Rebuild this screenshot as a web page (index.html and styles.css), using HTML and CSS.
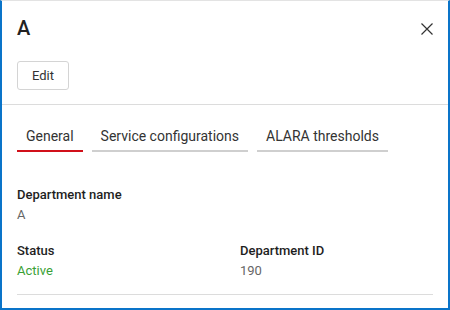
FILE: index.html
```html
<!DOCTYPE html>
<html lang="en">
  <head>
    <meta charset="UTF-8" />
    <title>Department A</title>
    <link rel="stylesheet" href="styles.css">
  </head>
  <body>
    <!-- 패널 -->
    <section class="panel">
      <header class="panel-head">
        <div class="title-row">
          <h1 class="title">A</h1>
          <button class="close" type="button" aria-label="Close">
            <svg width="12" height="12" viewBox="0 0 12 12">
              <path d="M0.5 0.5 L11.5 11.5 M11.5 0.5 L0.5 11.5" stroke="#333" stroke-width="1.2" fill="none" />
            </svg>
          </button>
        </div>
        <button class="btn" type="button">Edit</button>
      </header>

      <div class="panel-body">
        <!-- 탭 -->
        <nav class="tabs">
          <a href="#" class="tab on">General</a>
          <a href="#" class="tab">Service configurations</a>
          <a href="#" class="tab">ALARA thresholds</a>
        </nav>

        <!-- 상세정보 -->
        <div class="fields">
          <div class="field wide">
            <div class="label">Department name</div>
            <div class="value">A</div>
          </div>
          <div class="field">
            <div class="label">Status</div>
            <div class="value green">Active</div>
          </div>
          <div class="field">
            <div class="label">Department ID</div>
            <div class="value">190</div>
          </div>
        </div>
      </div>
    </section>
  </body>
</html>
```

FILE: styles.css
```css
/* 초기화 */
html,
body,
h1 {
  margin: 0;
  padding: 0;
}

body {
  font-family: Roboto, "Open Sans", sans-serif;
  color: #222;
  background-color: #fff;
}

/* 패널박스 */
.panel {
  box-sizing: border-box;
  width: 450px;
  height: 310px;
  border-top: 1px solid #e3e3e3;
  border-left: 2px solid #0a74c9;
  border-right: 2px solid #0a74c9;
  border-bottom: 2px solid #0a74c9;
}

/* 헤더 */
.panel-head {
  padding: 13px 15px 14px;
  border-bottom: 1px solid #dcdcdc;
}
.title-row {
  display: flex;
  justify-content: space-between;
  align-items: center;
}
.title {
  font-size: 20px;
  font-weight: 500;
  line-height: 28px;
}
.close {
  display: flex;
  padding: 0;
  margin-top: 1px;
  border: 0;
  background: none;
}

/* 버튼 */
.btn {
  display: block;
  box-sizing: border-box;
  width: 52px;
  height: 29px;
  margin-top: 19px;
  padding: 0;
  border: 1px solid #d4d4d4;
  border-radius: 3px;
  background-color: #fff;
  font-family: inherit;
  font-size: 13px;
  color: #333;
}

/* 본문 */
.panel-body {
  padding: 14px 15px 0;
}

/* 탭 */
.tabs {
  display: flex;
  gap: 9px;
}
.tab {
  padding: 7px 9px 4px 9px;
  border-bottom: 2px solid #cfcfcf;
  font-size: 14px;
  line-height: 20px;
  color: #333;
  text-decoration: none;
}
.tab.on {
  border-bottom-color: #d1101a;
}

/* 상세정보 그리드 */
.fields {
  display: grid;
  grid-template-columns: 223px 1fr;
  row-gap: 16px;
  margin-top: 33px;
  padding-bottom: 13px;
  border-bottom: 1px solid #dcdcdc;
}
.field.wide {
  grid-column: 1 / 3;
}
.label {
  font-size: 13px;
  font-weight: 500;
  line-height: 20px;
  color: #1e1e1e;
}
.value {
  font-size: 13px;
  line-height: 20px;
  color: #666;
}
.value.green {
  color: #3a9f36;
}
```
